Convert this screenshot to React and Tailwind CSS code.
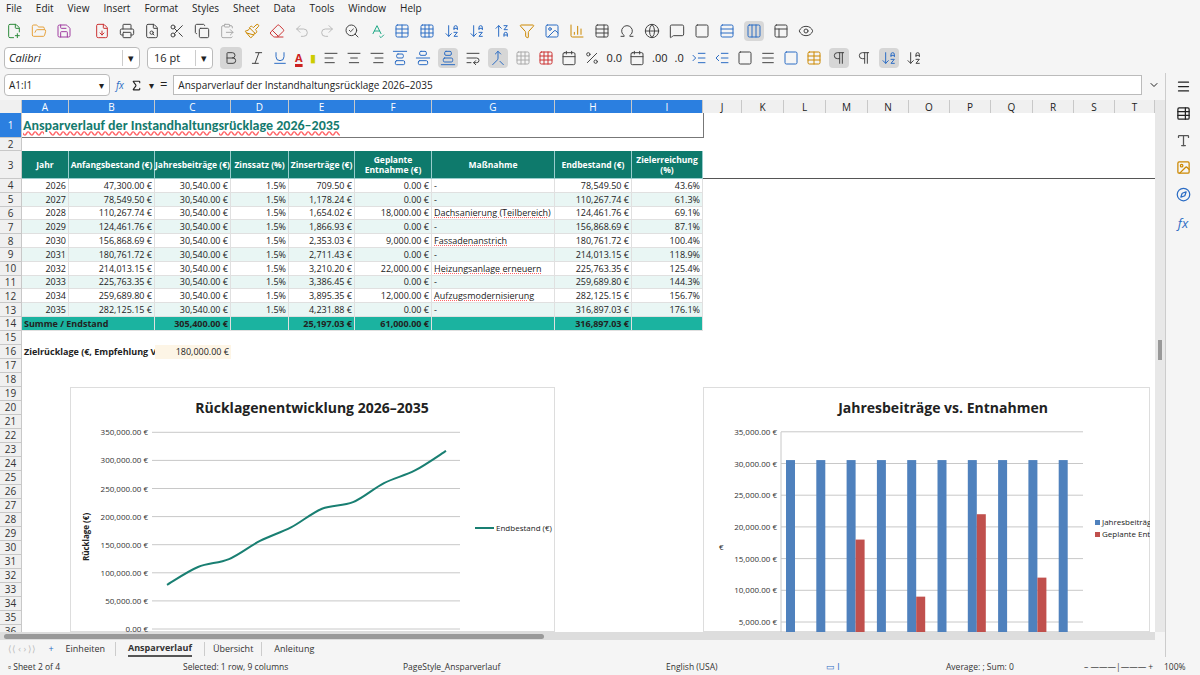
import React from "react";
import { FilePlus2, FolderOpen, Save, FileDown, Printer, FileSearch, Scissors, Copy, ClipboardPaste, Paintbrush, Eraser, Undo2, Redo2, SearchCheck, SpellCheck, Table, Grid3x3, ArrowDownAZ, ArrowUpZA, Filter, Image, BarChart3, Omega, Globe, MessageSquare, Rows3, Columns3, Eye, Bold, Italic, Underline, AlignLeft, AlignCenter, AlignRight, AlignVerticalJustifyStart, AlignVerticalJustifyCenter, AlignVerticalJustifyEnd, WrapText, Percent, Calendar, Menu, Type, PanelsTopLeft, Compass, ChevronDown, Sigma, Square, Merge, TableProperties, IndentIncrease, IndentDecrease, Pilcrow } from "lucide-react";

const cols = [22, 47, 86, 76, 58, 66, 77, 123, 77, 71, 39, 42, 42, 42, 41, 41, 41, 42, 41, 41, 40];
const letters = ["", "A", "B", "C", "D", "E", "F", "G", "H", "I", "J", "K", "L", "M", "N", "O", "P", "Q", "R", "S", "T"];
const tpl = cols.map((c) => c + "px").join(" ");

const data = [
  [2026, "47,300.00 €", "709.50 €", "0.00 €", "-", "78,549.50 €", "43.6%"],
  [2027, "78,549.50 €", "1,178.24 €", "0.00 €", "-", "110,267.74 €", "61.3%"],
  [2028, "110,267.74 €", "1,654.02 €", "18,000.00 €", "Dachsanierung (Teilbereich)", "124,461.76 €", "69.1%"],
  [2029, "124,461.76 €", "1,866.93 €", "0.00 €", "-", "156,868.69 €", "87.1%"],
  [2030, "156,868.69 €", "2,353.03 €", "9,000.00 €", "Fassadenanstrich", "180,761.72 €", "100.4%"],
  [2031, "180,761.72 €", "2,711.43 €", "0.00 €", "-", "214,013.15 €", "118.9%"],
  [2032, "214,013.15 €", "3,210.20 €", "22,000.00 €", "Heizungsanlage erneuern", "225,763.35 €", "125.4%"],
  [2033, "225,763.35 €", "3,386.45 €", "0.00 €", "-", "259,689.80 €", "144.3%"],
  [2034, "259,689.80 €", "3,895.35 €", "12,000.00 €", "Aufzugsmodernisierung", "282,125.15 €", "156.7%"],
  [2035, "282,125.15 €", "4,231.88 €", "0.00 €", "-", "316,897.03 €", "176.1%"],
];

function RowNum({ n, active }) {
  return <div className={`flex items-center justify-center overflow-hidden border-b border-r border-[#c8c8c8] text-[10px] leading-none ${active ? "bg-[#2b7fe0] text-white" : "bg-[#f0f0f0] text-[#333]"}`}>{n}</div>;
}

function Cell({ children, cls = "" }) {
  return <div className={`flex items-center overflow-hidden whitespace-nowrap border-b border-r border-[#e0e0e0] px-[2px] text-[9px] leading-none ${cls}`}>{children}</div>;
}

function LineChart() {
  const vals = [78549, 110267, 124461, 156868, 180761, 214013, 225763, 259689, 282125, 316897];
  const pts = vals.map((v, i) => [97 + i * 31, 242 - (v / 50000) * 28.1]);
  let d = `M${pts[0][0]},${pts[0][1]}`;
  for (let i = 0; i < pts.length - 1; i++) {
    const p0 = pts[Math.max(i - 1, 0)], p1 = pts[i], p2 = pts[i + 1], p3 = pts[Math.min(i + 2, pts.length - 1)];
    const c1 = [p1[0] + (p2[0] - p0[0]) / 6, p1[1] + (p2[1] - p0[1]) / 6];
    const c2 = [p2[0] - (p3[0] - p1[0]) / 6, p2[1] - (p3[1] - p1[1]) / 6];
    d += ` C${c1[0]},${c1[1]} ${c2[0]},${c2[1]} ${p2[0]},${p2[1]}`;
  }
  return (
    <svg width="485" height="245" className="absolute left-[70px] top-[387px] bg-white">
      <rect x="0.5" y="0.5" width="484" height="244" fill="none" stroke="#ddd" />
      <text x="242" y="26" textAnchor="middle" fontSize="14" fontWeight="bold" fill="#222">Rücklagenentwicklung 2026–2035</text>
      {[0, 1, 2, 3, 4, 5, 6, 7].map((k) => (
        <g key={k}>
          <line x1="82" x2="390" y1={242 - k * 28.1} y2={242 - k * 28.1} stroke="#c8c8c8" />
          <text x="78" y={245 - k * 28.1} textAnchor="end" fontSize="8" fill="#333">{(k * 50000).toLocaleString("en-US")}.00 €</text>
        </g>
      ))}
      <text transform="translate(19,150) rotate(-90)" fontSize="8" fontWeight="bold" textAnchor="middle" fill="#222">Rücklage (€)</text>
      <path d={d} fill="none" stroke="#197f72" strokeWidth="2" />
      <line x1="405" x2="424" y1="141" y2="141" stroke="#197f72" strokeWidth="2" />
      <text x="426" y="144" fontSize="8" fill="#222">Endbestand (€)</text>
    </svg>
  );
}

function BarChart() {
  const ent = [0, 0, 18000, 0, 9000, 0, 22000, 0, 12000, 0];
  const y = (v) => 235 - ((v - 5000) / 5000) * 31.7;
  return (
    <svg width="447" height="245" className="absolute left-[703px] top-[387px] bg-white">
      <rect x="0.5" y="0.5" width="446" height="244" fill="none" stroke="#ddd" />
      <text x="240" y="26" textAnchor="middle" fontSize="14" fontWeight="bold" fill="#222">Jahresbeiträge vs. Entnahmen</text>
      {[1, 2, 3, 4, 5, 6, 7].map((k) => (
        <g key={k}>
          <line x1="78" x2="380" y1={y(k * 5000)} y2={y(k * 5000)} stroke="#c8c8c8" />
          <text x="74" y={y(k * 5000) + 3} textAnchor="end" fontSize="8" fill="#333">{(k * 5000).toLocaleString("en-US")}.00 €</text>
        </g>
      ))}
      <line x1="78" x2="78" y1="45" y2="245" stroke="#c8c8c8" />
      <text x="16" y="163" fontSize="8" fill="#222">€</text>
      {ent.map((e, i) => (
        <g key={i}>
          <rect x={83 + i * 30.3} y={y(30540)} width="9" height={245 - y(30540)} fill="#4f81bd" />
          {e > 0 && <rect x={92 + i * 30.3} y={y(e)} width="9" height={245 - y(e)} fill="#c0504d" />}
        </g>
      ))}
      <rect x="392" y="133" width="5" height="5" fill="#4f81bd" />
      <text x="399" y="138" fontSize="8" fill="#222">Jahresbeiträge</text>
      <rect x="392" y="145" width="5" height="5" fill="#c0504d" />
      <text x="399" y="150" fontSize="8" fill="#222">Geplante Entna</text>
    </svg>
  );
}

const I = ({ as: C, c = "#444" }) => <C size={16} color={c} strokeWidth={1.5} />;

export default function App() {
  const green = "bg-[#0e7a6c] text-white font-bold justify-center text-center";
  const alt = (i) => (i % 2 ? "bg-[#e9f6f4]" : "");
  return (
    <div className="relative h-[675px] w-[1200px] overflow-hidden bg-[#f5f5f5] text-[#222]" style={{ fontFamily: "'Open Sans', 'Noto Sans', sans-serif" }}>
      <div className="flex h-[17px] items-center gap-[14px] px-[6px] text-[10px]">
        {["File", "Edit", "View", "Insert", "Format", "Styles", "Sheet", "Data", "Tools", "Window", "Help"].map((m) => <span key={m}>{m}</span>)}
      </div>
      <div className="flex h-[27px] items-center gap-[9px] px-[6px]">
        <I as={FilePlus2} c="#2e8b3c" /><I as={FolderOpen} c="#e6a23c" /><I as={Save} c="#a03ca0" />
        <span className="w-[4px]" /><I as={FileDown} c="#c33" /><I as={Printer} /><I as={FileSearch} />
        <I as={Scissors} /><I as={Copy} /><I as={ClipboardPaste} c="#aaa" /><I as={Paintbrush} c="#c80" /><I as={Eraser} c="#c33" />
        <I as={Undo2} c="#bbb" /><I as={Redo2} c="#bbb" /><I as={SearchCheck} /><I as={SpellCheck} c="#2a8" />
        <I as={Table} c="#2b6cc4" /><I as={Grid3x3} c="#2b6cc4" /><I as={ArrowDownAZ} c="#2b6cc4" /><I as={ArrowDownAZ} c="#2b6cc4" /><I as={ArrowUpZA} c="#2b6cc4" /><I as={Filter} c="#c80" />
        <I as={Image} c="#2b6cc4" /><I as={BarChart3} c="#c80" /><I as={TableProperties} /><I as={Omega} /><I as={Globe} /><I as={MessageSquare} /><I as={Square} />
        <I as={Rows3} c="#2b6cc4" /><span className="rounded bg-[#d8d8d8] p-[2px]"><I as={Columns3} c="#2b6cc4" /></span><I as={PanelsTopLeft} /><I as={Eye} />
      </div>
      <div className="flex h-[28px] items-center gap-[7px] px-[4px] text-[11px]">
        <div className="flex h-[22px] w-[136px] items-center justify-between rounded border border-[#bbb] bg-white pl-[4px] italic">Calibri<span className="border-l border-[#ccc] px-[5px] not-italic">▾</span></div>
        <div className="flex h-[22px] w-[66px] items-center justify-between rounded border border-[#bbb] bg-white pl-[6px]">16 pt<span className="border-l border-[#ccc] px-[5px]">▾</span></div>
        <span className="rounded bg-[#d6d6d6] p-[3px]"><I as={Bold} /></span><I as={Italic} /><I as={Underline} c="#2b6cc4" />
        <span className="font-bold text-[#c22]" style={{ textDecoration: "underline 3px" }}>A</span><span className="text-[#cc0]">▮</span>
        <I as={AlignLeft} /><I as={AlignCenter} /><I as={AlignRight} /><I as={AlignVerticalJustifyStart} c="#2b6cc4" /><I as={AlignVerticalJustifyCenter} c="#2b6cc4" /><span className="rounded bg-[#d6d6d6] p-[2px]"><I as={AlignVerticalJustifyEnd} c="#2b6cc4" /></span>
        <I as={WrapText} /><span className="rounded bg-[#d6d6d6] p-[2px]"><I as={Merge} c="#2b6cc4" /></span><I as={Grid3x3} c="#aaa" /><I as={Grid3x3} c="#c33" />
        <I as={Calendar} /><I as={Percent} /><span>0.0</span><I as={Calendar} /><span>.00</span><span>.0</span>
        <I as={IndentIncrease} c="#2b6cc4" /><I as={IndentDecrease} c="#2b6cc4" /><I as={Square} /><I as={Menu} /><I as={Square} c="#2b6cc4" /><I as={Table} c="#c80" />
        <span className="rounded bg-[#d6d6d6] p-[2px]"><I as={Pilcrow} /></span><I as={Pilcrow} /><span className="rounded bg-[#d6d6d6] p-[2px]"><I as={ArrowDownAZ} c="#2b6cc4" /></span><I as={ArrowDownAZ} />
      </div>
      <div className="flex h-[26px] items-center gap-[6px] px-[4px] text-[10px]">
        <div className="flex h-[22px] w-[106px] items-center justify-between rounded border border-[#bbb] bg-white pl-[4px]">A1:I1<span className="px-[5px]">▾</span></div>
        <span className="italic text-[#2b6cc4]">fx</span><Sigma size={13} /><span>▾</span><span className="text-[13px]">=</span>
        <div className="flex h-[20px] flex-1 items-center border border-[#bbb] bg-white px-[4px]">Ansparverlauf der Instandhaltungsrücklage 2026–2035</div>
        <ChevronDown size={12} className="mr-[36px]" />
      </div>
      <div className="absolute right-0 top-[73px] flex h-[584px] w-[35px] flex-col items-center gap-[12px] border-l border-[#ccc] pt-[6px]">
        <Menu size={15} /><TableProperties size={15} /><Type size={15} color="#555" /><Image size={15} color="#c80" /><Compass size={15} color="#2b6cc4" /><span className="text-[13px] italic text-[#2b6cc4]">fx</span>
      </div>
      <div className="absolute left-0 top-[100px] h-[532px] w-[1155px] overflow-hidden bg-white">
        <div className="grid" style={{ gridTemplateColumns: tpl }}>
          {letters.map((l, i) => (
            <div key={i} className={`flex h-[13px] items-center justify-center border-r border-[#c8c8c8] text-[10px] leading-none ${i > 0 && i < 10 ? "bg-[#2b7fe0] text-white" : "bg-[#f0f0f0]"}`}>{l}</div>
          ))}
        </div>
        <div className="grid" style={{ gridTemplateColumns: tpl, gridTemplateRows: "25px 13px 28px repeat(11, 13.8px) repeat(22, 14px)" }}>
          <RowNum n={1} active />
          <div className="col-span-9 flex items-center border-b border-[#777] px-[1px] text-[14px] font-bold text-[#147a6e] underline decoration-red-400 decoration-wavy" style={{ fontFamily: "Carlito, 'Open Sans', sans-serif" }}>Ansparverlauf der Instandhaltungsrücklage 2026–2035</div>
          <div className="col-span-11 border-l border-[#777]" />
          <RowNum n={2} /><div className="col-span-20" />
          <RowNum n={3} />
          {["Jahr", "Anfangsbestand (€)", "Jahresbeiträge (€)", "Zinssatz (%)", "Zinserträge (€)", "Geplante Entnahme (€)", "Maßnahme", "Endbestand (€)", "Zielerreichung (%)"].map((h) => (
            <div key={h} className={`flex items-center justify-center whitespace-pre-wrap border-r border-b border-[#9cc] text-center text-[8.5px] leading-[10px] ${green}`}>{h}</div>
          ))}
          <div className="col-span-11 border-b border-[#555]" />
          {data.map((r, i) => (
            <React.Fragment key={r[0]}>
              <RowNum n={i + 4} />
              {[r[0], r[1], "30,540.00 €", "1.5%", r[2], r[3]].map((v, j) => (
                <Cell key={j} cls={`justify-end ${alt(i)}`}>{v}</Cell>
              ))}
              <Cell cls={alt(i)}><span className={r[4] !== "-" ? "underline decoration-red-400 decoration-dotted" : ""}>{r[4]}</span></Cell>
              <Cell cls={`justify-end ${alt(i)}`}>{r[5]}</Cell>
              <Cell cls={`justify-end ${alt(i)}`}>{r[6]}</Cell>
              <div className="col-span-11" />
            </React.Fragment>
          ))}
          <RowNum n={14} />
          <Cell cls="col-span-2 bg-[#1bb3a0] font-bold">Summe / Endstand</Cell>
          <Cell cls="justify-end bg-[#1bb3a0] font-bold">305,400.00 €</Cell>
          <Cell cls="bg-[#1bb3a0]" />
          <Cell cls="justify-end bg-[#1bb3a0] font-bold">25,197.03 €</Cell>
          <Cell cls="justify-end bg-[#1bb3a0] font-bold">61,000.00 €</Cell>
          <Cell cls="bg-[#1bb3a0]" />
          <Cell cls="justify-end bg-[#1bb3a0] font-bold">316,897.03 €</Cell>
          <Cell cls="bg-[#1bb3a0]" />
          <div className="col-span-11" />
          {Array.from({ length: 22 }, (_, k) => k + 15).map((n) => (
            <React.Fragment key={n}>
              <RowNum n={n} />
              {n === 16 ? (
                <>
                  <div className="col-span-2 flex items-center overflow-hidden whitespace-nowrap px-[2px] text-[9px] font-bold leading-none">Zielrücklage (€, Empfehlung Verw</div>
                  <div className="flex items-center justify-end bg-[#fdf5e6] px-[2px] text-[9px] leading-none">180,000.00 €</div>
                  <div className="col-span-17" />
                </>
              ) : <div className="col-span-20" />}
            </React.Fragment>
          ))}
        </div>
      </div>
      <LineChart />
      <BarChart />
      <div className="absolute left-[1155px] top-[100px] h-[532px] w-[10px] bg-[#e8e8e8]"><div className="mx-auto mt-[240px] h-[20px] w-[4px] bg-[#999]" /></div>
      <div className="absolute left-0 top-[632px] h-[8px] w-[1155px] bg-[#ddd]"><div className="ml-[4px] mt-[2px] h-[5px] w-[540px] rounded bg-[#999]" /></div>
      <div className="absolute left-0 top-[641px] flex h-[16px] w-full items-center gap-[12px] px-[8px] text-[9px] text-[#333]">
        <span className="text-[#bbb]">⟨⟨ ‹ › ⟩⟩</span><span className="text-[#2b6cc4]">+</span>
        <span className="border-r border-[#ccc] pr-[10px]">Einheiten</span>
        <span className="border-b-2 border-[#555] font-bold">Ansparverlauf</span>
        <span className="border-l border-r border-[#ccc] px-[8px]">Übersicht</span>
        <span>Anleitung</span>
      </div>
      <div className="absolute left-0 top-[659px] flex h-[16px] w-full items-center text-[8.5px] text-[#333]">
        <span className="ml-[8px] w-[175px]">▫ Sheet 2 of 4</span>
        <span className="w-[220px]">Selected: 1 row, 9 columns</span>
        <span className="w-[263px]">PageStyle_Ansparverlauf</span>
        <span className="w-[160px]">English (USA)</span>
        <span className="w-[120px] text-[#2b6cc4]">▭ I</span>
        <span className="w-[138px]">Average: ; Sum: 0</span>
        <span className="w-[80px]">– ———|——— +</span>
        <span>100%</span>
      </div>
    </div>
  );
}
